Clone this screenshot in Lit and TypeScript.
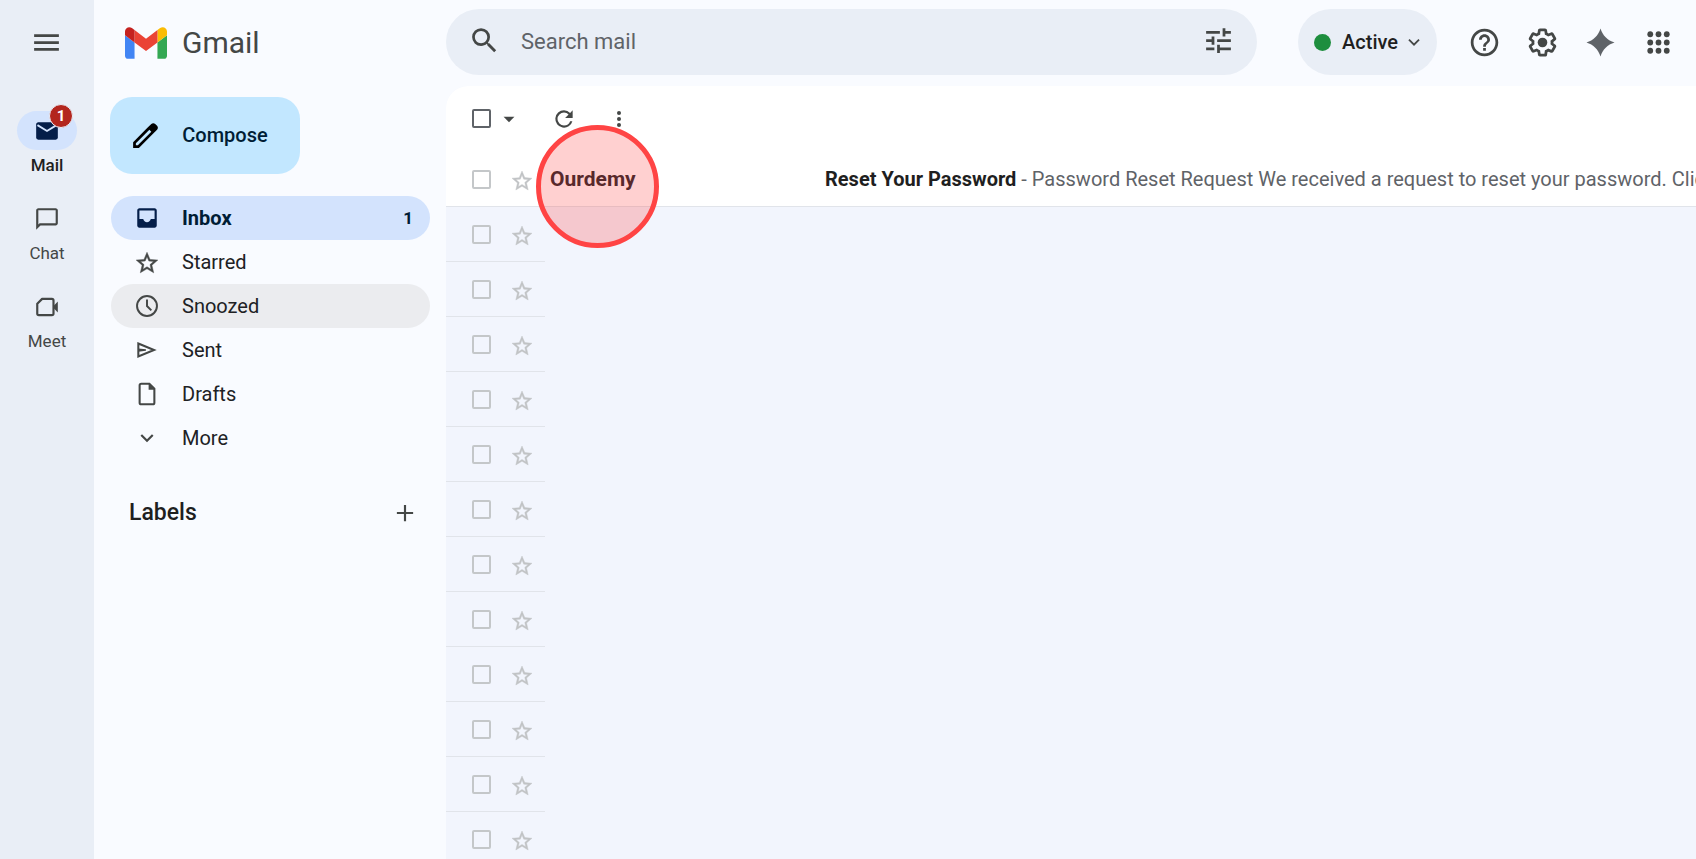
import { LitElement, html, svg, css } from "lit";
import { customElement } from "lit/decorators.js";

const icons = {
  menu: svg`<path d="M3 18h18v-2H3v2zm0-5h18v-2H3v2zm0-7v2h18V6H3z"/>`,
  mail: svg`<path d="M4 4h16a2 2 0 0 1 2 2v12a2 2 0 0 1-2 2H4a2 2 0 0 1-2-2V6c0-1.100.900-2 2-2z"/><path d="M3.200 6.600l8.800 5.400 8.800-5.400" fill="none" stroke="#d3e3fd" stroke-width="1.700"/>`,
  chat: svg`<path d="M20 2H4c-1.100 0-2 .900-2 2v18l4-4h14c1.100 0 2-.900 2-2V4c0-1.100-.900-2-2-2zm0 14H5.170L4 17.170V4h16v12z"/>`,
  meet: svg`<path d="M7.500 4.500h9a1.500 1.500 0 0 1 1.500 1.500v12a1.500 1.500 0 0 1-1.500 1.500h-12A1.500 1.500 0 0 1 3 18V9z" fill="none" stroke="currentColor" stroke-width="2" stroke-linejoin="round"/><path d="M18 11l4-4v10l-4-4z"/>`,
  search: svg`<path d="M15.500 14h-.790l-.280-.270A6.471 6.471 0 0 0 16 9.500 6.500 6.500 0 1 0 9.500 16c1.610 0 3.090-.590 4.230-1.570l.270.280v.790l5 4.990L20.490 19l-4.990-5zm-6 0C7.010 14 5 11.990 5 9.500S7.010 5 9.500 5 14 7.010 14 9.500 11.990 14 9.500 14z"/>`,
  tune: svg`<path d="M3 17v2h6v-2H3zM3 5v2h10V5H3zm10 16v-2h8v-2h-8v-2h-2v6h2zM7 9v2H3v2h4v2h2V9H7zm14 4v-2H11v2h10zm-6-4h2V7h4V5h-4V3h-2v6z"/>`,
  help: svg`<path d="M11 18h2v-2h-2v2zm1-16C6.480 2 2 6.480 2 12s4.480 10 10 10 10-4.480 10-10S17.520 2 12 2zm0 18c-4.410 0-8-3.590-8-8s3.590-8 8-8 8 3.590 8 8-3.590 8-8 8zm0-14c-2.210 0-4 1.790-4 4h2c0-1.100.900-2 2-2s2 .900 2 2c0 2-3 1.750-3 5h2c0-2.250 3-2.500 3-5 0-2.210-1.790-4-4-4z"/>`,
  gear: svg`<path d="M13.850 22.250h-3.700c-.740 0-1.360-.540-1.450-1.270l-.270-1.890c-.270-.140-.530-.290-.790-.460l-1.800.720c-.700.260-1.470-.030-1.810-.650L2.200 15.530c-.350-.660-.200-1.440.360-1.880l1.530-1.190c-.010-.150-.020-.300-.020-.460 0-.150.010-.310.020-.460l-1.520-1.190c-.590-.450-.740-1.260-.370-1.880l1.850-3.190c.340-.620 1.110-.900 1.790-.630l1.810.730c.260-.170.520-.320.780-.460l.270-1.910c.090-.700.710-1.250 1.440-1.250h3.700c.740 0 1.360.540 1.450 1.270l.270 1.890c.270.140.530.290.790.460l1.800-.720c.710-.260 1.480.030 1.820.650l1.840 3.180c.360.660.200 1.440-.360 1.880l-1.520 1.190c.010.150.020.300.020.460s-.010.310-.020.460l1.520 1.190c.560.450.720 1.230.370 1.860l-1.860 3.220c-.340.620-1.110.900-1.800.630l-1.800-.720c-.260.170-.520.320-.780.460l-.270 1.910c-.100.680-.720 1.220-1.460 1.220zm-3.230-2h2.760l.370-2.550.530-.220c.440-.180.880-.440 1.340-.780l.450-.340 2.380.960 1.380-2.400-2.030-1.580.070-.560c.030-.260.060-.510.060-.780s-.030-.530-.060-.780l-.070-.560 2.030-1.580-1.390-2.400-2.390.960-.450-.350c-.420-.320-.870-.580-1.330-.770l-.520-.220-.370-2.550h-2.760l-.370 2.550-.530.210c-.440.190-.880.440-1.340.790l-.450.330-2.380-.950-1.390 2.390 2.030 1.580-.070.560a7 7 0 0 0-.060.790c0 .260.020.530.060.780l.070.560-2.030 1.580 1.380 2.400 2.390-.960.450.350c.430.330.860.580 1.330.770l.530.220.380 2.550z"/><circle cx="12" cy="12" r="3.500"/>`,
  spark: svg`<path fill="#5f6368" d="M12 1.800C13.500 6.800 17.200 10.500 22.200 12 17.200 13.500 13.500 17.200 12 22.200 10.500 17.200 6.800 13.500 1.800 12 6.800 10.500 10.500 6.800 12 1.800z"/>`,
  apps: svg`${[6, 12, 18].map((y) => [6, 12, 18].map((x) => svg`<circle cx=${x} cy=${y} r="2.100"/>`))}`,
  pencil: svg`<path d="M20.410 4.940l-1.350-1.350c-.780-.780-2.050-.780-2.830 0L13.400 6.410 3 16.820V21h4.180l10.460-10.460 2.770-2.770c.790-.780.790-2.050 0-2.830zm-14 14.120L5 19v-1.360l9.820-9.820 1.410 1.410-9.820 9.830z"/>`,
  inbox: svg`<path d="M19 3H5c-1.100 0-2 .900-2 2v14c0 1.100.900 2 2 2h14c1.100 0 2-.900 2-2V5c0-1.100-.900-2-2-2zm0 10h-3.500c-.500 1.700-1.800 3-3.500 3s-3-1.300-3.500-3H5V5h14v8z" fill-rule="evenodd"/>`,
  star: svg`<path stroke="currentColor" stroke-width=".4" d="M22 10.240l-7.190-.620L12 3 9.190 9.630 2 10.240l5.460 4.730L5.820 22 12 18.270 18.180 22l-1.630-7.030L22 10.240zM12 16.400l-3.760 2.270 1-4.280-3.320-2.880 4.380-.380L12 7.100l1.710 4.040 4.380.380-3.320 2.880 1 4.280L12 16.400z"/>`,
  clock: svg`<circle cx="12" cy="12" r="9.200" fill="none" stroke="currentColor" stroke-width="1.800"/><path d="M12 6v6l4 4" fill="none" stroke="currentColor" stroke-width="1.800"/>`,
  send: svg`<path d="M4 6l14.500 6L4 18z" fill="none" stroke="currentColor" stroke-width="1.900"/><path d="M4 10.500l7 .700v1.600l-7 .700z"/>`,
  draft: svg`<path d="M6.700 2.500h7.500l4.600 4.600v12.900a1.500 1.500 0 0 1-1.500 1.500H6.700a1.500 1.500 0 0 1-1.500-1.500V4A1.500 1.500 0 0 1 6.700 2.500z" fill="none" stroke="currentColor" stroke-width="1.900"/><path d="M13.500 2.500v5.500h5.500z"/>`,
  chevron: svg`<path d="M7.400 8.600L12 13.200l4.600-4.600L18 10l-6 6-6-6z"/>`,
  thinChevron: svg`<path d="M6.500 9.500l5.500 5.500 5.500-5.500" fill="none" stroke="currentColor" stroke-width="2"/>`,
  plus: svg`<path d="M12 4.500v15M4.500 12h15" fill="none" stroke="currentColor" stroke-width="2"/>`,
  caret: svg`<path d="M7 10l5 5 5-5z"/>`,
  refresh: svg`<path d="M17.650 6.350A7.958 7.958 0 0 0 12 4a8 8 0 1 0 7.730 10h-2.080A5.990 5.990 0 0 1 12 18a6 6 0 1 1 0-12c1.660 0 3.140.690 4.220 1.780L13 11h7V4l-2.350 2.350z"/>`,
  dots: svg`<circle cx="12" cy="5.500" r="2.200"/><circle cx="12" cy="12" r="2.200"/><circle cx="12" cy="18.500" r="2.200"/>`,
};

type IconName = keyof typeof icons;

const icon = (name: IconName, size = "md") =>
  html`<svg class="icon ${size}" viewBox="0 0 24 24" aria-hidden="true">${icons[name]}</svg>`;

const apps: { label: string; icon: IconName; badge?: string }[] = [
  { label: "Mail", icon: "mail", badge: "1" },
  { label: "Chat", icon: "chat" },
  { label: "Meet", icon: "meet" },
];

const folders: { label: string; icon: IconName; count?: string; state?: string }[] = [
  { label: "Inbox", icon: "inbox", count: "1", state: "selected" },
  { label: "Starred", icon: "star" },
  { label: "Snoozed", icon: "clock", state: "hovered" },
  { label: "Sent", icon: "send" },
  { label: "Drafts", icon: "draft" },
  { label: "More", icon: "chevron" },
];

@customElement("app-root")
export class AppRoot extends LitElement {
  static styles = css`
    :host {
      display: flex;
      height: 100vh;
      overflow: hidden;
      background: #f9fbff;
      color: #202124;
      font: 400 20px/24px Roboto, "Liberation Sans", sans-serif;
    }
    * { box-sizing: border-box; }
    button, input { font: inherit; color: inherit; margin: 0; }
    button { display: inline-flex; align-items: center; justify-content: center; padding: 0; border: 0; background: none; }
    a { color: inherit; text-decoration: none; }
    ul { list-style: none; margin: 0; padding: 0; }
    .icon { display: block; flex: none; fill: currentColor; color: #444746; }
    .sm { width: 22px; height: 22px; }
    .md { width: 26px; height: 26px; }
    .lg { width: 33px; height: 33px; }

    .rail { flex: none; width: 94px; background: #e9eef6; }
    .rail-menu { display: flex; width: 100%; height: 84px; padding-right: 2px; }
    .rail-list { display: grid; gap: 22px; padding-top: 27px; }
    .rail-link { display: flex; flex-direction: column; align-items: center; gap: 3px; height: 66px; font-size: 17px; color: #444746; }
    .rail-pill { position: relative; display: grid; place-items: center; width: 60px; height: 41px; border-radius: 20px; }
    .rail-link.current { color: #1f1f1f; font-weight: 500; }
    .current .rail-pill { background: #d3e3fd; }
    .current .icon { color: #041e49; }
    .badge { position: absolute; top: -7px; right: 4px; width: 24px; height: 24px; border: 1px solid #e9eef6; border-radius: 12px; background: #b3261e; color: #fff; font-size: 15px; line-height: 22px; font-weight: 700; text-align: center; }

    .side { flex: none; width: 352px; padding-right: 16px; }
    .brand { display: flex; align-items: center; gap: 15px; height: 86px; padding-left: 31px; font-size: 30px; line-height: 36px; color: #444746; }
    .logo { width: 42px; height: 32px; }
    .compose { gap: 20px; height: 77px; width: 190px; margin: 11px 0 22px 16px; padding: 0 13px 1px 0; border-radius: 22px; background: #c2e7ff; color: #001d35; font-weight: 500; }
    .compose .icon { color: #000; }
    .folder { display: flex; align-items: center; gap: 22px; height: 44px; margin-left: 17px; padding: 0 17px 0 23px; border-radius: 22px; }
    .folder .name { flex: 1; }
    .selected { background: #d3e3fd; color: #001d35; font-weight: 700; }
    .selected .icon { color: #041e49; }
    .hovered { background: #ebecef; }
    .count { font-size: 17px; }
    .labels { display: flex; align-items: center; justify-content: space-between; margin-top: 36px; padding: 0 12px 0 35px; height: 33px; }
    .labels h2 { margin: 0; font-size: 23px; line-height: 28px; font-weight: 500; color: #1f1f1f; }

    .main { flex: 1; min-width: 0; display: flex; flex-direction: column; }
    .top { display: flex; align-items: center; height: 86px; flex: none; padding: 0 21px 2px 0; }
    .search { flex: 1; min-width: 0; display: flex; align-items: center; gap: 20px; height: 66px; padding: 0 22px 3px; border-radius: 33px; background: #e9eef6; }
    .search input { flex: 1; min-width: 0; border: 0; padding: 2px 0 0; background: none; outline: 0; font-size: 22px; line-height: 28px; }
    .search input::placeholder { color: #5f6368; opacity: 1; }
    .status { height: 66px; width: 139px; margin: 0 31px 0 41px; gap: 11px; border-radius: 33px; background: #e9eef6; color: #1f1f1f; font-weight: 500; }
    .dot { width: 17px; height: 17px; border-radius: 9px; background: #1e8e3e; }
    .status .icon { margin: 0 -4px 0 -6px; }
    .tools { display: flex; gap: 25px; }

    .panel { position: relative; flex: 1; min-height: 0; overflow: hidden; border-top-left-radius: 22px; background: #f2f5fd; }
    .toolbar { display: flex; align-items: center; height: 66px; padding: 0 0 1px 26px; background: #fff; }
    .toolbar .caret { margin-left: 5px; }
    .toolbar .refresh { margin-left: 29px; }
    .toolbar .more { margin-left: 31px; }
    .check { appearance: none; flex: none; width: 19px; height: 19px; border: 2px solid #c4c7c9; border-radius: 2px; background: transparent; }
    .toolbar .check { border-color: #5f6368; }
    .mail { display: flex; align-items: center; width: 99px; height: 55px; padding-left: 26px; border-bottom: 1px solid #e1e4ea; }
    .mail .icon { width: 24px; height: 24px; color: #c1c3c5; }
    .mail .star { margin: 2px 16px 0 19px; }
    .mail.filled { width: auto; background: #fff; }
    .from { flex: none; width: 275px; font-size: 21px; font-weight: 700; }
    .line { flex: 1; min-width: 0; overflow: hidden; white-space: nowrap; color: #5f6368; }
    .line b { color: #1f1f1f; font-weight: 700; }
    .marker { position: absolute; left: 90px; top: 39px; width: 123px; height: 123px; border: 5px solid #ff4444; border-radius: 50%; background: rgba(255, 68, 68, 0.25); pointer-events: none; }
  `;

  private row(content: unknown = "") {
    return html`<li class="mail ${content ? "filled" : ""}">
      <input class="check" type="checkbox" aria-label="Select conversation" />
      <button class="star" aria-label="Star conversation">${icon("star", "sm")}</button>
      ${content}
    </li>`;
  }

  render() {
    return html`
      <nav class="rail" aria-label="Apps">
        <button class="rail-menu" aria-label="Main menu">${icon("menu", "lg")}</button>
        <div class="rail-list">
          ${apps.map((a) => html`<a class="rail-link ${a.badge ? "current" : ""}" href="#">
            <span class="rail-pill">${icon(a.icon)}${a.badge ? html`<span class="badge">${a.badge}</span>` : ""}</span>
            <span>${a.label}</span>
          </a>`)}
        </div>
      </nav>
      <aside class="side">
        <a class="brand" href="#">
          <svg class="logo" viewBox="52 42 88 66" aria-hidden="true">
            <path fill="#4285f4" d="M58 108h14V74L52 59v43c0 3.320 2.690 6 6 6"/>
            <path fill="#34a853" d="M120 108h14c3.320 0 6-2.690 6-6V59l-20 15"/>
            <path fill="#fbbc04" d="M120 48v26l20-15v-8c0-7.420-8.470-11.650-14.400-7.200"/>
            <path fill="#ea4335" d="M72 74V48l24 18 24-18v26L96 92"/>
            <path fill="#c5221f" d="M52 51v8l20 15V48l-5.600-4.200c-5.940-4.450-14.400-.220-14.400 7.200"/>
          </svg>
          <span>Gmail</span>
        </a>
        <button class="compose">${icon("pencil", "lg")}<span>Compose</span></button>
        <nav aria-label="Folders">
          ${folders.map((f) => html`<a class="folder ${f.state ?? ""}" href="#">
            ${icon(f.icon)}<span class="name">${f.label}</span>
            ${f.count ? html`<span class="count">${f.count}</span>` : ""}
          </a>`)}
        </nav>
        <div class="labels">
          <h2>Labels</h2>
          <button aria-label="Create new label">${icon("plus")}</button>
        </div>
      </aside>
      <main class="main">
        <header class="top">
          <div class="search" role="search">
            <button aria-label="Search">${icon("search", "lg")}</button>
            <input type="text" placeholder="Search mail" aria-label="Search mail" />
            <button aria-label="Search options">${icon("tune", "lg")}</button>
          </div>
          <button class="status"><span class="dot"></span><span>Active</span>${icon("thinChevron", "sm")}</button>
          <div class="tools">
            <button aria-label="Support">${icon("help", "lg")}</button>
            <button aria-label="Settings">${icon("gear", "lg")}</button>
            <button aria-label="Gemini">${icon("spark", "lg")}</button>
            <button aria-label="Google apps">${icon("apps", "lg")}</button>
          </div>
        </header>
        <section class="panel">
          <div class="toolbar">
            <input class="check" type="checkbox" aria-label="Select all" />
            <button class="caret" aria-label="Select options">${icon("caret")}</button>
            <button class="refresh" aria-label="Refresh">${icon("refresh")}</button>
            <button class="more" aria-label="More options">${icon("dots", "sm")}</button>
          </div>
          <ul>
            ${this.row(html`<span class="from">Ourdemy</span>
              <span class="line"><b>Reset Your Password</b> - Password Reset Request We received a request to reset your password. Click</span>`)}
            ${Array.from({ length: 12 }, () => this.row())}
          </ul>
          <div class="marker"></div>
        </section>
      </main>
    `;
  }
}
